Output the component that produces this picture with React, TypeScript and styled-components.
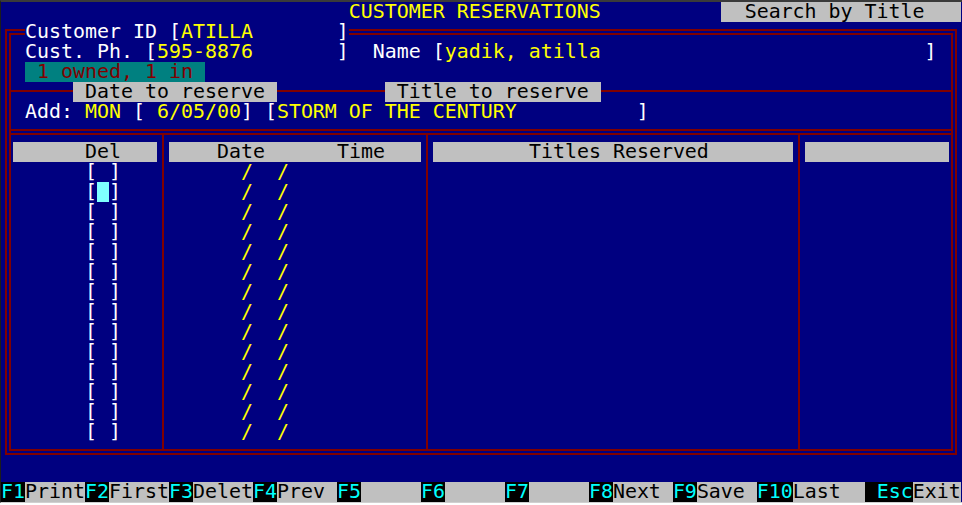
import React from "react";
import styled, { createGlobalStyle } from "styled-components";

const BLUE = "#000080";
const RED = "#800000";
const GRAY = "#c0c0c0";
const YELLOW = "#ffff00";
const CYAN = "#00ffff";
const CW = 12; // character cell width
const RH = 20; // character cell height

const GlobalStyle = createGlobalStyle`
  html, body {
    margin: 0;
    padding: 0;
    background: #ffffff;
  }
`;

const Monitor = styled.div`
  width: 961px;
  border-top: 2px solid #3a3a3a;
  border-left: 1px solid #1c1c1c;
  border-bottom: 1px solid #d0d0d0;
  background: ${BLUE};
`;

const Screen = styled.div`
  width: ${80 * CW}px;
  font-family: "DejaVu Sans Mono", "Liberation Mono", monospace;
  font-size: 19.93px;
  line-height: ${RH}px;
  color: #ffffff;
  white-space: pre;
`;

const Row = styled.div`
  display: flex;
  height: ${RH}px;
`;

const RuledRow = styled(Row)`
  background: linear-gradient(${RED}, ${RED}) 10px 8px / 940px 2px no-repeat;
`;

const Txt = styled.span<{ $fg?: string; $bg?: string }>`
  color: ${(p) => p.$fg || "inherit"};
  background: ${(p) => p.$bg || "transparent"};
`;

const Field = styled.span`
  background: ${BLUE};
`;

const Value = styled.span`
  color: ${YELLOW};
`;

const Label = styled.span`
  background: ${GRAY};
  color: #000000;
`;

const Badge = styled.span`
  background: #008080;
  color: ${RED};
`;

const Cursor = styled.span`
  background: #7fffff;
`;

// double-line box, drawn behind the text rows
const Frame = styled.div`
  position: relative;
  z-index: 0;
  height: ${22 * RH}px;
  display: flex;
  flex-direction: column;

  &::before,
  &::after {
    content: "";
    position: absolute;
    border: 2px solid ${RED};
    z-index: -1;
  }
  &::before {
    inset: 7px 4px;
  }
  &::after {
    inset: 11px 8px;
  }
`;

const DoubleRule = styled.div`
  margin: 7px 10px 0;
  height: 2px;
  border-top: 2px solid ${RED};
  border-bottom: 2px solid ${RED};
`;

const Table = styled.div`
  display: flex;
  height: 314px;
`;

const Column = styled.div<{ $cols: number; $rule?: boolean }>`
  width: ${(p) => p.$cols * CW}px;
  padding: 7px 0;
  display: flex;
  flex-direction: column;
  background: ${(p) =>
    p.$rule
      ? `linear-gradient(${RED}, ${RED}) right 5px top 0 / 2px 100% no-repeat`
      : "none"};
`;

const KeyBar = styled.div`
  display: flex;
  height: ${RH}px;
  background: ${GRAY};
`;

const Key = styled.span`
  background: #000000;
  color: ${CYAN};
`;

const KeyLabel = styled.span`
  color: #000000;
`;

const keys: [string, string][] = [
  ["F1", "Print"],
  ["F2", "First"],
  ["F3", "Delet"],
  ["F4", "Prev "],
  ["F5", "     "],
  ["F6", "     "],
  ["F7", "     "],
  ["F8", "Next "],
  ["F9", "Save "],
  ["F10", "Last  "],
  [" Esc", "Exit"],
];

const rows = Array.from({ length: 14 }, (_, i) => i);

const App = () => {
  return (
    <>
      <GlobalStyle />
      <Monitor>
        <Screen>
          <Row>
            <Txt>{" ".repeat(29)}</Txt>
            <Txt $fg={YELLOW}>CUSTOMER RESERVATIONS</Txt>
            <Txt>{" ".repeat(10)}</Txt>
            <Label>{"  Search by Title   "}</Label>
          </Row>

          <Frame>
            <Row>
              <Txt>{"  "}</Txt>
              <Field>
                {"Customer ID ["}
                <Value>ATILLA</Value>
                {"       ]"}
              </Field>
            </Row>
            <Row>
              <Txt>{"  Cust. Ph. ["}</Txt>
              <Value>595-8876</Value>
              <Txt>{"       ]  Name ["}</Txt>
              <Value>yadik, atilla</Value>
              <Txt>{" ".repeat(27) + "]"}</Txt>
            </Row>
            <Row>
              <Txt>{"  "}</Txt>
              <Badge>{" 1 owned, 1 in "}</Badge>
            </Row>
            <RuledRow>
              <Txt>{"      "}</Txt>
              <Label>{" Date to reserve "}</Label>
              <Txt>{" ".repeat(9)}</Txt>
              <Label>{" Title to reserve "}</Label>
            </RuledRow>
            <Row>
              <Txt>{"  Add: "}</Txt>
              <Value>MON</Value>
              <Txt>{" ["}</Txt>
              <Value>{" 6/05/00"}</Value>
              <Txt>{"] ["}</Txt>
              <Value>STORM OF THE CENTURY</Value>
              <Txt>{" ".repeat(10) + "]"}</Txt>
            </Row>

            <DoubleRule />

            <Table>
              <Column $cols={14} $rule>
                <Row>
                  <Txt>{" "}</Txt>
                  <Label>{"      Del   "}</Label>
                </Row>
                {rows.map((i) => (
                  <Row key={i}>
                    <Txt>{"       ["}</Txt>
                    {i === 1 ? <Cursor>{" "}</Cursor> : <Txt>{" "}</Txt>}
                    <Txt>]</Txt>
                  </Row>
                ))}
              </Column>
              <Column $cols={22} $rule>
                <Row>
                  <Label>{"    Date      Time   "}</Label>
                </Row>
                {rows.map((i) => (
                  <Row key={i}>
                    <Txt $fg={YELLOW}>{"      /  /"}</Txt>
                  </Row>
                ))}
              </Column>
              <Column $cols={31} $rule>
                <Row>
                  <Label>{"        Titles Reserved       "}</Label>
                </Row>
              </Column>
              <Column $cols={13}>
                <Row>
                  <Label>{" ".repeat(12)}</Label>
                </Row>
              </Column>
            </Table>
          </Frame>

          <Row />

          <KeyBar>
            {keys.map(([k, label]) => (
              <React.Fragment key={k}>
                <Key>{k}</Key>
                <KeyLabel>{label}</KeyLabel>
              </React.Fragment>
            ))}
          </KeyBar>
        </Screen>
      </Monitor>
    </>
  );
};

export default App;
